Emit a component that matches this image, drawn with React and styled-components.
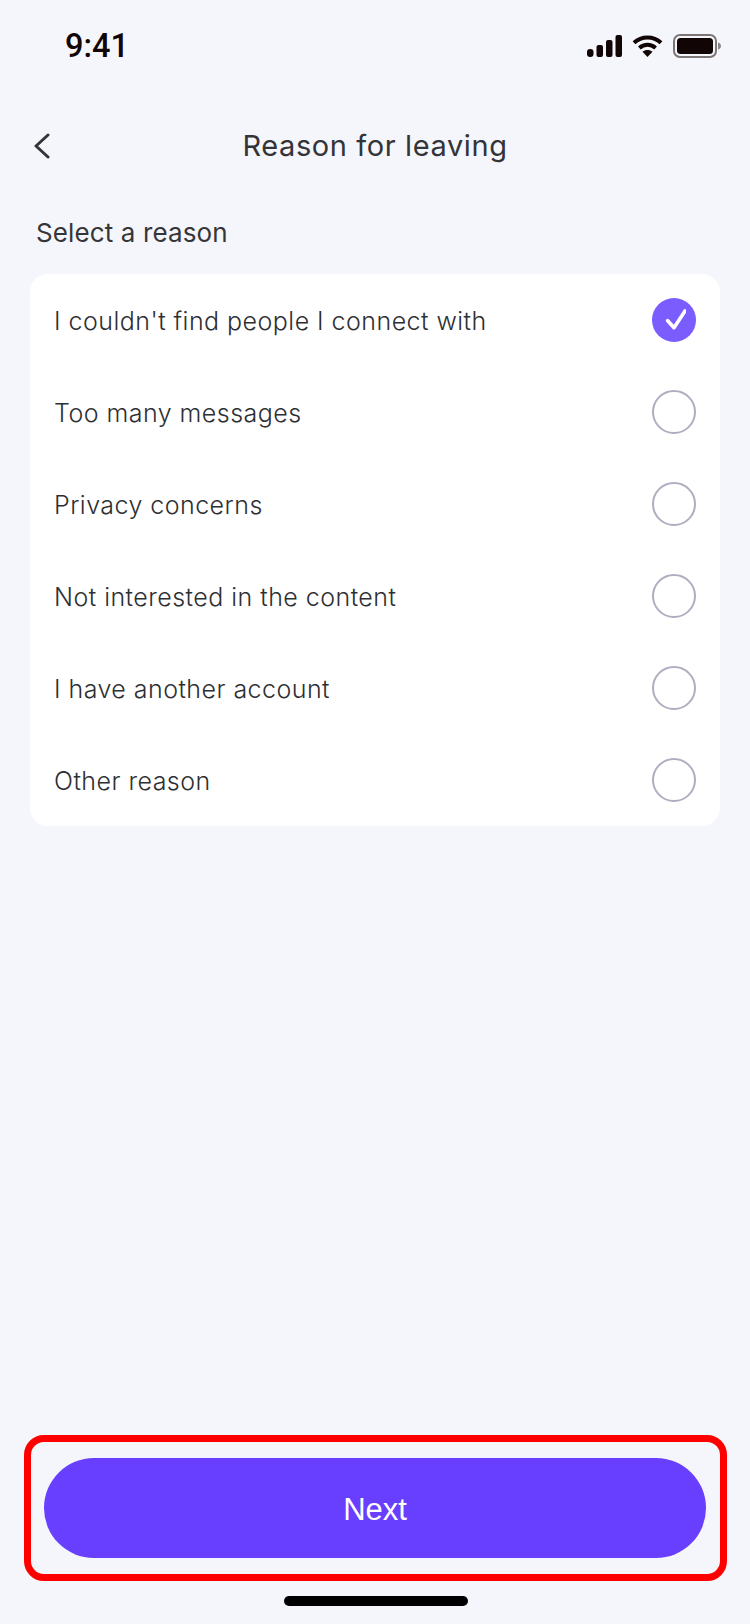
import React from 'react';
import styled, { createGlobalStyle } from 'styled-components';

const GlobalStyle = createGlobalStyle`
  html, body {
    margin: 0;
    padding: 0;
    background: #f5f6fb;
  }
`;

const Page = styled.div`
  width: 750px;
  height: 1624px;
  display: flex;
  flex-direction: column;
  background: #f5f6fb;
  font-family: Inter, "Liberation Sans", sans-serif;
  color: #333438;
  overflow: hidden;
`;

const StatusBar = styled.div`
  height: 92px;
  box-sizing: border-box;
  padding: 29px 29px 0 65px;
  display: flex;
  justify-content: space-between;
  align-items: flex-start;
`;

const Time = styled.span`
  font-family: Roboto, "Liberation Sans", sans-serif;
  font-size: 32.5px;
  line-height: 34px;
  font-weight: 500;
  color: #120505;
`;

const StatusIcons = styled.div`
  display: flex;
  align-items: center;
  gap: 10px;
  margin-top: 5px;
`;

const Header = styled.header`
  height: 108px;
  display: flex;
  align-items: center;
  justify-content: center;
  position: relative;
`;

const BackButton = styled.button`
  position: absolute;
  left: 33px;
  top: 41px;
  width: 18px;
  height: 26px;
  padding: 0;
  border: 0;
  background: none;
  display: flex;
`;

const Title = styled.h1`
  margin: 0;
  font-size: 29px;
  font-weight: 400;
  line-height: 36px;
  letter-spacing: 0.6px;
`;

const SectionLabel = styled.div`
  padding-left: 36px;
  font-size: 26px;
  line-height: 30px;
  margin-top: 18px;
  letter-spacing: 0.12px;
  color: #35363a;
`;

const Card = styled.ul`
  list-style: none;
  margin: 26px 30px 0;
  padding: 24px;
  background: #fff;
  border-radius: 18px;
  display: flex;
  flex-direction: column;
  gap: 48px;
`;

const Row = styled.li`
  height: 44px;
  display: flex;
  align-items: center;
  justify-content: space-between;
`;

const RowLabel = styled.span`
  padding-top: 2px;
  font-size: 25px;
  font-weight: 300;
  letter-spacing: 0.46px;
  font-variant-ligatures: common-ligatures;
  color: #2e2f33;
`;

const Radio = styled.span`
  width: 44px;
  height: 44px;
  box-sizing: border-box;
  border-radius: 50%;
  display: flex;
  align-items: center;
  justify-content: center;
  background: ${p => (p.$checked ? '#7b5cff' : '#fff')};
  border: ${p => (p.$checked ? '0' : '2px solid #aeaec0')};
`;

const Footer = styled.div`
  margin: auto 23px 0 24px;
  height: 146px;
  box-sizing: border-box;
  border: 7px solid #ff0000;
  border-radius: 20px;
  padding: 16px 14px 16px 13px;
  display: flex;
`;

const NextButton = styled.button`
  flex: 1;
  border: 0;
  border-radius: 50px;
  background: #683fff;
  color: #fff;
  font-family: "Liberation Sans", Arial, sans-serif;
  font-size: 31px;
  padding: 4px 0 0;
`;

const HomeArea = styled.div`
  height: 43px;
  display: flex;
  justify-content: center;
  padding: 15px 0 0 1px;
  box-sizing: border-box;
`;

const HomeBar = styled.div`
  width: 184px;
  height: 10px;
  border-radius: 5px;
  background: #000;
`;

const SignalIcon = () => (
  <svg width="35" height="22" viewBox="0 0 35 22">
    <rect x="0" y="14" width="6.5" height="8" rx="3" fill="#120505" />
    <rect x="9.5" y="10" width="6.5" height="12" rx="2" fill="#120505" />
    <rect x="19" y="5" width="6.5" height="17" rx="2" fill="#120505" />
    <rect x="28.5" y="0" width="6.5" height="22" rx="2" fill="#120505" />
  </svg>
);

const WifiIcon = () => (
  <svg width="31" height="22" viewBox="0 0 31 22" fill="none" stroke="#120505" strokeWidth="4">
    <path d="M2 7.8C9.6 .7 21.4 .7 29 7.8" />
    <path d="M7.4 13C12 8.8 19 8.8 23.6 13" />
    <path d="M15.5 22l-5-5.3c2.8-2.4 7.2-2.4 10 0z" fill="#120505" stroke="none" />
  </svg>
);

const BatteryIcon = () => (
  <svg width="48" height="24" viewBox="0 0 48 24">
    <rect x="1" y="1" width="42" height="22" rx="6" fill="none" stroke="#7d7676" strokeWidth="2" />
    <rect x="4" y="4" width="36" height="16" rx="3.5" fill="#120505" />
    <path d="M45 8.5c1.8.5 3 1.9 3 3.5s-1.2 3-3 3.5z" fill="#8d8686" />
  </svg>
);

const BackIcon = () => (
  <svg width="18" height="26" viewBox="0 0 18 26" fill="none" stroke="#333438" strokeWidth="3" strokeLinecap="round" strokeLinejoin="round">
    <path d="M15 2L3 13l12 11" />
  </svg>
);

const CheckIcon = () => (
  <svg width="24" height="22" viewBox="0 0 24 22" fill="none" stroke="#fff" strokeWidth="3.6" strokeLinecap="round" strokeLinejoin="round">
    <path d="M5.7 11.7L12 18.7L23 2" />
  </svg>
);

const reasons = [
  "I couldn't find people I connect with",
  'Too many messages',
  'Privacy concerns',
  'Not interested in the content',
  'I have another account',
  'Other reason',
];

const App = () => (
  <Page>
    <GlobalStyle />
    <StatusBar>
      <Time>9:41</Time>
      <StatusIcons>
        <SignalIcon />
        <WifiIcon />
        <BatteryIcon />
      </StatusIcons>
    </StatusBar>
    <Header>
      <BackButton><BackIcon /></BackButton>
      <Title>Reason for leaving</Title>
    </Header>
    <SectionLabel>Select a reason</SectionLabel>
    <Card>
      {reasons.map((reason, i) => (
        <Row key={reason}>
          <RowLabel>{reason}</RowLabel>
          <Radio $checked={i === 0}>{i === 0 && <CheckIcon />}</Radio>
        </Row>
      ))}
    </Card>
    <Footer>
      <NextButton>Next</NextButton>
    </Footer>
    <HomeArea><HomeBar /></HomeArea>
  </Page>
);

export default App;
